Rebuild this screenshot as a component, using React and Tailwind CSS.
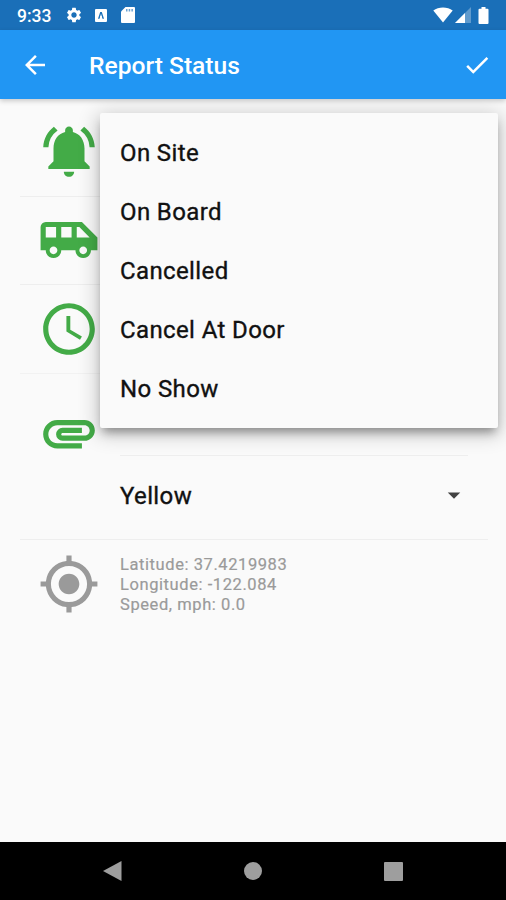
import React, { useState } from 'react';
import {
  MdNotificationsActive,
  MdAirportShuttle,
  MdAccessTime,
  MdAttachment,
  MdMyLocation,
  MdArrowBack,
  MdCheck,
  MdArrowDropDown,
  MdSettings,
} from 'react-icons/md';

const statuses = ['On Site', 'On Board', 'Cancelled', 'Cancel At Door', 'No Show'];

function StatusBar() {
  return (
    <div className="h-[30px] shrink-0 bg-[#1a6fb8] text-white flex items-center justify-between pl-[17px] pr-[17px]">
      <div className="flex items-center">
        <span className="w-[48px] pt-[3px] text-[17.5px] leading-none font-medium">9:33</span>
        <MdSettings className="size-[18px]" />
        <svg viewBox="0 0 12 13" className="w-3 h-[13px] ml-[12px]">
          <path fillRule="evenodd" fill="currentColor" d="M1 0h10a1 1 0 0 1 1 1v11a1 1 0 0 1-1 1H1a1 1 0 0 1-1-1V1a1 1 0 0 1 1-1zM5.2 3 3 9.8h1.5L6 4.8l1.5 5H9L6.8 3z" />
          <path fill="currentColor" d="M5 7.2h2v1H5z" />
        </svg>
        <svg viewBox="0 0 14 16" className="w-[14px] h-4 ml-[14px]">
          <path fill="currentColor" d="M4.5 0H13a1 1 0 0 1 1 1v14a1 1 0 0 1-1 1H1a1 1 0 0 1-1-1V4.5z" />
          <path fill="#1a6fb8" fillOpacity=".65" d="M5 2h1.5v2.5H5zM7.7 2h1.5v2.5H7.7zM10.4 2h1.5v2.5h-1.5z" />
        </svg>
      </div>
      <div className="flex items-center">
        <svg viewBox="0 0 20 16" className="w-5 h-4">
          <path fill="currentColor" d="M10 15.5.3 3.5C3 1.5 6.3.4 10 .4s7 1.1 9.7 3.1z" />
        </svg>
        <svg viewBox="0 0 16 16" className="size-4 ml-[2px]">
          <path fill="currentColor" fillOpacity=".3" d="M0 16 16 0v16z" />
          <path fill="currentColor" d="M0 16 10 6v10z" />
        </svg>
        <svg viewBox="0 0 10 17" className="w-[11px] h-[17px] ml-[7px]">
          <path fill="currentColor" d="M3 0h4v1.7h2a1 1 0 0 1 1 1V16a1 1 0 0 1-1 1H1a1 1 0 0 1-1-1V2.7a1 1 0 0 1 1-1h2z" />
        </svg>
      </div>
    </div>
  );
}

function Row({ icon: Icon, className = '', children }) {
  return (
    <div className={`flex items-center pl-[18px] ${className}`}>
      <Icon className="size-[62px] shrink-0" />
      <div className="flex-1 pl-5">{children}</div>
    </div>
  );
}

function StatusMenu({ onSelect }) {
  return (
    <ul className="absolute left-[100px] right-[8px] top-[14px] h-[315px] pt-[10px] rounded-[2px] bg-[#fafafa] shadow-[0_7px_9px_-3px_rgba(0,0,0,0.34),0_4px_20px_3px_rgba(0,0,0,0.2)]">
      {statuses.map((s) => (
        <li key={s} onClick={() => onSelect(s)} className="h-[59px] px-5 flex items-center text-[24px] tracking-[0.38px] [-webkit-text-stroke:0.35px_#111] cursor-pointer">
          {s}
        </li>
      ))}
    </ul>
  );
}

export default function App() {
  const [open, setOpen] = useState(true);
  const [status, setStatus] = useState('');

  const selectStatus = (s) => {
    setStatus(s);
    setOpen(false);
  };

  return (
    <div className="w-[506px] h-[900px] flex flex-col overflow-hidden bg-[#fafafa] text-[#111] font-['Roboto',sans-serif]">
      <StatusBar />
      <header className="h-[69px] shrink-0 z-10 bg-[#2196f3] text-white flex items-center pl-5 pr-[14px] shadow-[0_2px_5px_rgba(0,0,0,0.2)]">
        <MdArrowBack className="size-[30px]" />
        <h1 className="flex-1 pl-[39px] pt-[3px] text-[24.6px] font-medium">Report Status</h1>
        <MdCheck className="size-[30px]" />
      </header>

      <main className="relative flex-1 pt-[9px] pl-5 pr-[18px]">
        <Row icon={MdNotificationsActive} className="h-[89px] pb-[2px] border-b border-[#eeeeee] text-[#43ab47]">
          <span className="text-[24px] text-[#111]">{status}</span>
        </Row>
        <Row icon={MdAirportShuttle} className="h-[88px] pb-px border-b border-[#eeeeee] text-[#43ab47]" />
        <Row icon={MdAccessTime} className="h-[89px] border-b border-[#f2f2f2] text-[#43ab47]" />
        <div className="h-[166px] border-b border-[#eeeeee]">
          <div className="h-[82px] flex">
            <div className="pl-[18px] pt-[28px] text-[#43ab47]">
              <MdAttachment className="size-[62px]" />
            </div>
            <div className="flex-1 ml-5 mr-5 border-b border-[#eeeeee]" />
          </div>
          <button className="w-full h-[82px] pl-[100px] pr-[19px] pb-[2px] flex items-center justify-between text-[24px] tracking-[0.38px] [-webkit-text-stroke:0.35px_#111]">
            Yellow
            <MdArrowDropDown className="size-[30px] -mt-[2px] text-[#424242]" />
          </button>
        </div>
        <Row icon={MdMyLocation} className="h-[88px] text-[#9a9a9a]">
          <div className="pt-[2px] text-[16.5px] leading-[20px] tracking-[0.58px] [-webkit-text-stroke:0.2px_#9a9a9a]">
            <p>Latitude: 37.4219983</p>
            <p>Longitude: -122.084</p>
            <p>Speed, mph: 0.0</p>
          </div>
        </Row>
        {open && <StatusMenu onSelect={selectStatus} />}
      </main>

      <nav className="h-[58px] shrink-0 bg-black text-[#9e9e9e] flex items-center justify-between pl-[102px] pr-[103px]">
        <svg viewBox="0 0 20 22" className="w-5 h-[22px]">
          <path fill="currentColor" d="M19.5 1v20L1 11z" />
        </svg>
        <div className="size-[18px] rounded-full bg-current" />
        <div className="size-[19px] rounded-[1px] bg-current" />
      </nav>
    </div>
  );
}
